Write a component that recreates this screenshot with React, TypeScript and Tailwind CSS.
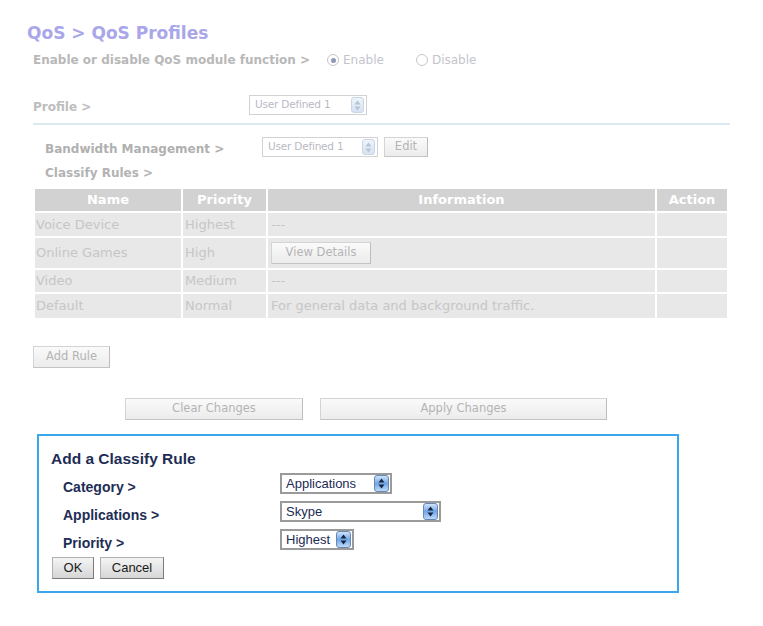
import React from 'react';

// Faded (disabled-looking) parts of the page sit above the active "Add a Classify Rule" panel.

const topFont = { fontFamily: '"DejaVu Sans", "Liberation Sans", sans-serif' };
const boxFont = { fontFamily: '"Liberation Sans", Arial, sans-serif' };

function Stepper({ faded }: { faded?: boolean }) {
  return (
    <span
      className={
        faded
          ? 'flex h-[16px] w-[13px] items-center justify-center rounded-[3px] border border-[#c9d6e6] bg-gradient-to-b from-[#eef4fb] to-[#d5e3f2]'
          : 'flex h-[17px] w-[15px] items-center justify-center rounded-[3px] border border-[#6a86b5] bg-gradient-to-b from-[#cfe4fb] via-[#6fa6e6] to-[#bcdaf8]'
      }
    >
      <svg width="7" height="11" viewBox="0 0 7 11">
        <path d="M3.5 0.5 L6.5 4.5 H0.5 Z" fill={faded ? '#b9c4d2' : '#1a2440'} />
        <path d="M3.5 10.5 L6.5 6.5 H0.5 Z" fill={faded ? '#b9c4d2' : '#1a2440'} />
      </svg>
    </span>
  );
}

function FadedSelect({ label, width }: { label: string; width: string }) {
  return (
    <div
      className={`flex h-[20px] ${width} items-center justify-between border border-[#d2d2d2] bg-white pl-[5px] pr-[2px] text-[10.5px] tracking-[-0.2px] text-[#b9b9c4]`}
    >
      <span>{label}</span>
      <Stepper faded />
    </div>
  );
}

function BoxSelect({ label, width }: { label: string; width: string }) {
  return (
    <div
      className={`flex h-[21px] ${width} items-center justify-between border-2 border-[#9a9a9a] bg-white pl-[4px] pr-[1px] text-[13px] text-[#1c2a55]`}
    >
      <span>{label}</span>
      <Stepper />
    </div>
  );
}

function FadedButton({ children, className }: { children: React.ReactNode; className: string }) {
  return (
    <div
      className={`flex items-center justify-center border border-[#d4d4d4] border-b-[#c4c4c4] border-r-[#bdbdbd] bg-gradient-to-b from-[#fafafa] to-[#ececec] text-[11.5px] text-[#b4b4b4] ${className}`}
    >
      {children}
    </div>
  );
}

const rows = [
  { name: 'Voice Device', priority: 'Highest', info: '---', h: 'h-[23px]' },
  { name: 'Online Games', priority: 'High', info: 'button', h: 'h-[30px]' },
  { name: 'Video', priority: 'Medium', info: '---', h: 'h-[22px]' },
  { name: 'Default', priority: 'Normal', info: 'For general data and background traffic.', h: 'h-[24px]' },
];

export default function App() {
  return (
    <div className="h-[626px] w-[763px] overflow-hidden bg-white">
      <div className="pl-[27px] pt-[23px]" style={topFont}>
        <h1 className="h-[20px] text-[17px] font-bold leading-[20px] text-[#a9a6ea]">QoS &gt; QoS Profiles</h1>

        <div className="mt-[10px] flex h-[14px] items-center pl-[6px] text-[12px] font-bold text-[#b8b8b8]">
          <span>Enable or disable QoS module function &gt;</span>
          <span className="ml-[17px] flex h-[12px] w-[12px] items-center justify-center rounded-full border border-[#c6c6c6] bg-white">
            <span className="h-[5px] w-[5px] rounded-full bg-[#8e99b8]" />
          </span>
          <span className="ml-[4px] font-normal text-[#c4c4cc]">Enable</span>
          <span className="ml-[32px] h-[12px] w-[12px] rounded-full border border-[#c6c6c6] bg-white" />
          <span className="ml-[4px] font-normal text-[#c4c4cc]">Disable</span>
        </div>

        <div className="mt-[27px] flex items-center pl-[6px]">
          <span className="w-[216px] pt-[4px] text-[12px] font-bold text-[#bdbdbd]">Profile &gt;</span>
          <FadedSelect label="User Defined 1" width="w-[118px]" />
        </div>

        <div className="ml-[6px] mt-[7px] h-[2px] w-[697px] bg-[#dde9f1]" />

        <div className="mt-[11px] flex items-center pl-[18px]">
          <span className="w-[217px] pt-[4px] text-[12px] font-bold text-[#b0b0b0]">Bandwidth Management &gt;</span>
          <FadedSelect label="User Defined 1" width="w-[116px]" />
          <FadedButton className="ml-[6px] h-[20px] w-[44px]">Edit</FadedButton>
        </div>

        <div className="mt-[8px] pl-[18px] text-[12px] font-bold leading-[14px] text-[#b3b3b3]">Classify Rules &gt;</div>

        <div className="ml-[8px] mt-[9px] grid w-[692px] grid-cols-[146px_83px_387px_70px] gap-[2px] text-[13px]">
          <div className="flex h-[22px] items-center justify-center bg-[#d2d2d2] font-bold text-white">Name</div>
          <div className="flex h-[22px] items-center justify-center bg-[#d2d2d2] font-bold text-white">Priority</div>
          <div className="flex h-[22px] items-center justify-center bg-[#d2d2d2] font-bold text-white">Information</div>
          <div className="flex h-[22px] items-center justify-center bg-[#d2d2d2] font-bold text-white">Action</div>
          {rows.map((r) => (
            <React.Fragment key={r.name}>
              <div className={`flex ${r.h} items-center bg-[#e8e8e8] pl-[1px] text-[#c6c6c6]`}>{r.name}</div>
              <div className={`flex ${r.h} items-center bg-[#e8e8e8] pl-[2px] text-[#c6c6c6]`}>{r.priority}</div>
              <div className={`flex ${r.h} items-center bg-[#e8e8e8] pl-[3px] text-[#c6c6c6]`}>
                {r.info === 'button' ? (
                  <FadedButton className="h-[22px] w-[100px]">View Details</FadedButton>
                ) : (
                  r.info
                )}
              </div>
              <div className={`${r.h} bg-[#e8e8e8]`} />
            </React.Fragment>
          ))}
        </div>

        <FadedButton className="ml-[6px] mt-[28px] h-[22px] w-[77px]">Add Rule</FadedButton>

        <div className="mt-[30px] flex pl-[98px]">
          <FadedButton className="h-[22px] w-[178px]">Clear Changes</FadedButton>
          <FadedButton className="ml-[17px] h-[22px] w-[287px]">Apply Changes</FadedButton>
        </div>
      </div>

      <div
        className="ml-[37px] mt-[14px] h-[159px] w-[642px] border-2 border-[#3aa6ec] pl-[12px] pt-[15px] text-[#1d2d55]"
        style={boxFont}
      >
        <div className="text-[15.5px] font-bold leading-[16px]">Add a Classify Rule</div>
        <div className="mt-[6px] flex flex-col gap-[7px] pl-[12px]">
          <div className="flex h-[21px] items-start">
            <span className="w-[217px] pt-[6px] text-[14px] font-bold leading-[16px]">Category &gt;</span>
            <BoxSelect label="Applications" width="w-[112px]" />
          </div>
          <div className="flex h-[21px] items-start">
            <span className="w-[217px] pt-[6px] text-[14px] font-bold leading-[16px]">Applications &gt;</span>
            <BoxSelect label="Skype" width="w-[161px]" />
          </div>
          <div className="flex h-[21px] items-start">
            <span className="w-[217px] pt-[6px] text-[14px] font-bold leading-[16px]">Priority &gt;</span>
            <BoxSelect label="Highest" width="w-[74px]" />
          </div>
        </div>
        <div className="mt-[7px] flex gap-[6px] pl-[1px]">
          <div className="flex h-[22px] w-[42px] items-center justify-center border border-[#b0b0b0] border-b-[#7a7a7a] border-r-[#7a7a7a] bg-gradient-to-b from-[#f4f4f4] to-[#d6d6d6] text-[13px] text-[#1a1a1a]">
            OK
          </div>
          <div className="flex h-[22px] w-[64px] items-center justify-center border border-[#b0b0b0] border-b-[#7a7a7a] border-r-[#7a7a7a] bg-gradient-to-b from-[#f4f4f4] to-[#d6d6d6] text-[13px] text-[#1a1a1a]">
            Cancel
          </div>
        </div>
      </div>
    </div>
  );
}
